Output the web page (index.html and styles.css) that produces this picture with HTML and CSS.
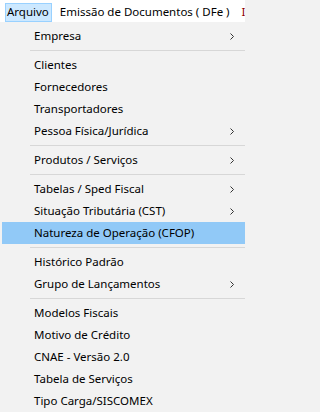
FILE: index.html
```html
<!DOCTYPE html>
<html lang="pt">
<head>
<meta charset="utf-8">
<link rel="stylesheet" href="styles.css">
</head>
<body>
<div class="menubar">
  <div class="bar-item active">Arquivo</div>
  <div class="bar-item">Emissão de Documentos ( DFe )</div>
  <div class="bar-item next">I</div>
</div>
<div class="menu">
  <div class="item">Empresa<span class="arrow"><svg width="4" height="7" viewBox="0 0 4 7"><path d="M0.5 0.5 L3.5 3.5 L0.5 6.5" fill="none" stroke="#333" stroke-width="1"/></svg></span></div>
  <div class="sep"></div>
  <div class="item">Clientes</div>
  <div class="item">Fornecedores</div>
  <div class="item">Transportadores</div>
  <div class="item">Pessoa Física/Jurídica<span class="arrow"><svg width="4" height="7" viewBox="0 0 4 7"><path d="M0.5 0.5 L3.5 3.5 L0.5 6.5" fill="none" stroke="#333" stroke-width="1"/></svg></span></div>
  <div class="sep"></div>
  <div class="item">Produtos / Serviços<span class="arrow"><svg width="4" height="7" viewBox="0 0 4 7"><path d="M0.5 0.5 L3.5 3.5 L0.5 6.5" fill="none" stroke="#333" stroke-width="1"/></svg></span></div>
  <div class="sep"></div>
  <div class="item">Tabelas / Sped Fiscal<span class="arrow"><svg width="4" height="7" viewBox="0 0 4 7"><path d="M0.5 0.5 L3.5 3.5 L0.5 6.5" fill="none" stroke="#333" stroke-width="1"/></svg></span></div>
  <div class="item">Situação Tributária (CST)<span class="arrow"><svg width="4" height="7" viewBox="0 0 4 7"><path d="M0.5 0.5 L3.5 3.5 L0.5 6.5" fill="none" stroke="#333" stroke-width="1"/></svg></span></div>
  <div class="item selected">Natureza de Operação (CFOP)</div>
  <div class="sep"></div>
  <div class="item">Histórico Padrão</div>
  <div class="item">Grupo de Lançamentos<span class="arrow"><svg width="4" height="7" viewBox="0 0 4 7"><path d="M0.5 0.5 L3.5 3.5 L0.5 6.5" fill="none" stroke="#333" stroke-width="1"/></svg></span></div>
  <div class="sep"></div>
  <div class="item">Modelos Fiscais</div>
  <div class="item">Motivo de Crédito</div>
  <div class="item">CNAE - Versão 2.0</div>
  <div class="item">Tabela de Serviços</div>
  <div class="item">Tipo Carga/SISCOMEX</div>
</div>
</body>
</html>
```
FILE: styles.css
```css
html, body {
  margin: 0;
  padding: 0;
  background: #f2f2f2;
  font-family: "Noto Sans", "Open Sans", sans-serif;
  font-size: 11.5px;
  color: #000;
}
body {
  width: 245px;
  height: 412px;
  overflow: hidden;
}
.menubar {
  height: 22px;
  box-sizing: border-box;
  padding: 3px 0 0 5px;
  background: #fff;
  display: flex;
  white-space: nowrap;
  overflow: hidden;
}
.bar-item {
  height: 19px;
  box-sizing: border-box;
  border: 1px solid transparent;
  padding: 0 2px 0 1px;
  line-height: 16px;
  margin-right: 6px;
  flex: none;
}
.bar-item.active {
  background: #cce8ff;
  border-color: #99d1ff;
}
.bar-item.next {
  color: #8b0000;
  margin-left: 2px;
  margin-right: 0;
  padding: 0;
}
.menu {
  padding-top: 3px;
  background: #f2f2f2;
}
.item {
  height: 22px;
  margin-left: 2px;
  padding: 0 11px 0 32px;
  display: flex;
  align-items: center;
  justify-content: space-between;
  white-space: nowrap;
  line-height: 22px;
}
.item.selected {
  background: #91c9f7;
}
.arrow {
  display: flex;
  align-items: center;
}
.sep {
  height: 1px;
  background: #d7d7d7;
  margin: 3px 0 3px 30px;
}
```
